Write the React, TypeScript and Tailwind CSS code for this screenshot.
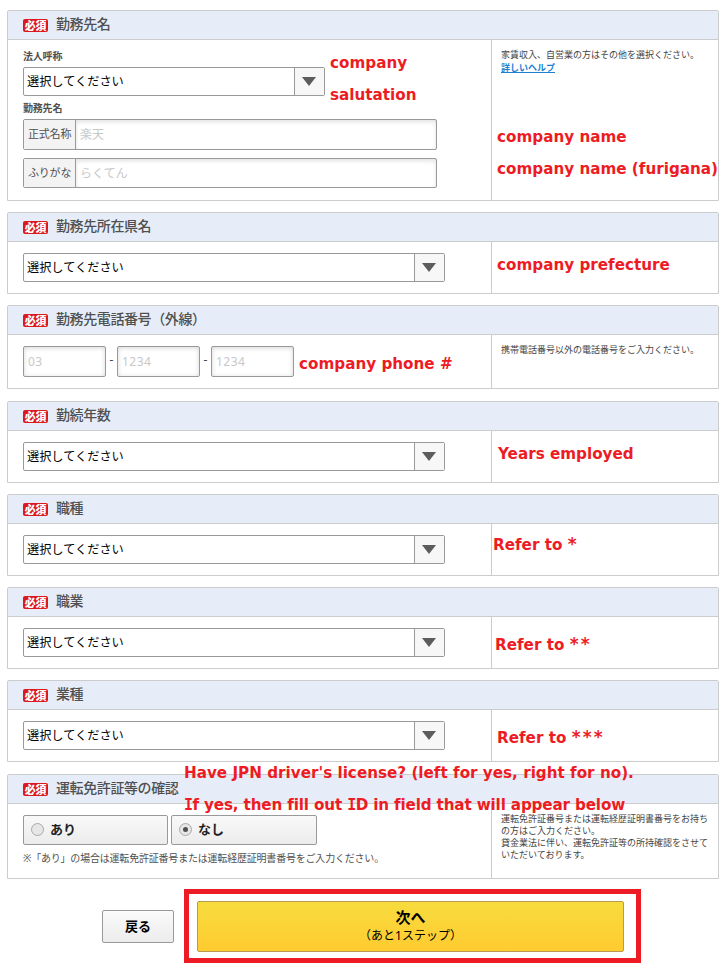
import type { ReactNode } from 'react';

const jp = "font-['Noto_Sans','Noto_Sans_CJK_JP',sans-serif]";

function Panel({ title, className, children, side }: { title: string; className: string; children: ReactNode; side?: ReactNode }) {
  return (
    <section className={`flex w-[712px] flex-col rounded-t-[2px] border border-[#ccc] ${className}`}>
      <header className="flex h-[29px] shrink-0 items-center border-b border-[#ccc] bg-[#e6edf8] pl-[15px]">
        <span className="flex h-[13px] w-[25px] items-center justify-center rounded-[2px] bg-[#dc171d] text-[11px] leading-none font-black tracking-[-0.2px] text-white">
          必須
        </span>
        <h2 className="-mt-[3px] ml-2 text-[14px] leading-5 font-medium tracking-[-0.4px] text-[#505050]">{title}</h2>
      </header>
      <div className="flex min-h-0 flex-1">
        <div className="w-[483px] shrink-0 pl-[15px]">{children}</div>
        <aside className="flex-1 border-l border-[#ccc] pl-[9px] text-[9px] leading-3 whitespace-nowrap text-[#444]">{side}</aside>
      </div>
    </section>
  );
}

function Select({ className }: { className: string }) {
  return (
    <div className={`flex h-[29px] rounded-[2px] border border-[#999] bg-white ${className}`}>
      <div className="flex-1 pl-[3px] text-[12.2px] leading-[27px] text-black">選択してください</div>
      <div className="flex w-[30px] items-center border-l border-[#999] bg-[#f7f7f7] pl-[7px]">
        <svg width="14" height="9" viewBox="0 0 14 9">
          <path d="M0 0H14L7 9Z" fill="#5c5c5c" />
        </svg>
      </div>
    </div>
  );
}

function LabeledInput({ label, value, className }: { label: string; value: string; className: string }) {
  return (
    <div className={`flex w-[414px] rounded-[2px] border border-[#999] ${className}`}>
      <div className="w-[52px] shrink-0 border-r border-[#999] bg-[#f3f3f3] pl-[4px] text-[11px] leading-[27px] tracking-[-0.2px] text-[#505050]">{label}</div>
      <div className="flex-1 pl-[4px] text-[12px] leading-[29px] text-[#c8c8c8] shadow-[inset_0_2px_4px_rgba(0,0,0,0.12)]">{value}</div>
    </div>
  );
}

function PhoneBox({ value }: { value: string }) {
  return (
    <div className="h-[31px] w-[83px] rounded-[2px] border border-[#999] pl-[4px] text-[12px] leading-[29px] tracking-[0.5px] text-[#c8c8c8] shadow-[inset_0_1px_5px_rgba(0,0,0,0.16)]">
      {value}
    </div>
  );
}

function Radio({ label, checked, className }: { label: string; checked?: boolean; className: string }) {
  return (
    <div className={`flex h-[30px] items-center rounded-[2px] border border-[#999] bg-linear-to-b from-[#f9f9f9] to-[#ececec] pl-[7px] ${className}`}>
      <span className="-mt-px flex size-[13px] items-center justify-center rounded-full border border-[#aaa] bg-[#e6e6e6]">
        {checked && <span className="size-[5px] rounded-full bg-[#505050]" />}
      </span>
      <span className="-mt-[2px] ml-[6px] text-[13px] leading-5 font-bold text-[#222]">{label}</span>
    </div>
  );
}

function Note({ className, children }: { className: string; children: ReactNode }) {
  return (
    <p
      className={`absolute pt-px font-['DejaVu_Sans',sans-serif] text-[15.2px] leading-8 font-bold whitespace-nowrap text-[#ed1c24] [font-variant-ligatures:none] ${className}`}
    >
      {children}
    </p>
  );
}

function SerifI() {
  return <span className="font-['DejaVu_Sans_Mono',monospace] text-[15px] tracking-[-0.5px]">I</span>;
}

function Stars({ children }: { children: string }) {
  return <span className="text-[17px] leading-none tracking-[2.1px]">{children}</span>;
}

export default function App() {
  return (
    <main lang="ja" className={`relative h-[965px] w-[725px] overflow-hidden bg-white pt-[10px] pl-[7px] ${jp}`}>
      <Panel
        title="勤務先名"
        className="h-[191px]"
        side={
          <div className="pt-[9px]">
            家賃収入、自営業の方はその他を選択ください。
            <a className="mt-px block font-bold text-[#1a7fcf] underline">詳しいヘルプ</a>
          </div>
        }
      >
        <div className="h-[27px] pt-[10px] text-[10px] leading-3 font-bold tracking-[-0.2px] text-[#505050]">法人呼称</div>
        <Select className="w-[302px]" />
        <div className="h-[23px] pt-[6px] text-[10px] leading-3 font-bold tracking-[-0.2px] text-[#505050]">勤務先名</div>
        <LabeledInput label="正式名称" value="楽天" className="h-[31px]" />
        <LabeledInput label="ふりがな" value="らくてん" className="mt-2 h-[30px]" />
      </Panel>
      <Panel title="勤務先所在県名" className="mt-[11px] h-[82px]">
        <Select className="mt-[11px] w-[422px]" />
      </Panel>
      <Panel title="勤務先電話番号（外線）" className="mt-[11px] h-[84px]" side={<div className="pt-[9px]">携帯電話番号以外の電話番号をご入力ください。</div>}>
        <div className="flex pt-[11px] text-[12px] leading-[27px] text-[#444]">
          <PhoneBox value="03" />
          <span className="w-[11px] text-center">-</span>
          <PhoneBox value="1234" />
          <span className="w-[11px] text-center">-</span>
          <PhoneBox value="1234" />
        </div>
      </Panel>
      <Panel title="勤続年数" className="mt-3 h-[82px]">
        <Select className="mt-[11px] w-[422px]" />
      </Panel>
      <Panel title="職種" className="mt-[11px] h-[82px]">
        <Select className="mt-[11px] w-[422px]" />
      </Panel>
      <Panel title="職業" className="mt-[11px] h-[82px]">
        <Select className="mt-[11px] w-[422px]" />
      </Panel>
      <Panel title="業種" className="mt-[11px] h-[82px]">
        <Select className="mt-[11px] w-[422px]" />
      </Panel>
      <Panel
        title="運転免許証等の確認"
        className="mt-3 h-[105px]"
        side={
          <div className="pt-[9px]">
            運転免許証番号または運転経歴証明書番号をお持ち
            <br />
            の方はご入力ください。
            <br />
            貸金業法に伴い、運転免許証等の所持確認をさせて
            <br />
            いただいております。
          </div>
        }
      >
        <div className="flex gap-[3px] pt-[11px]">
          <Radio label="あり" className="w-[145px]" />
          <Radio label="なし" checked className="w-[146px]" />
        </div>
        <p className="mt-[6px] text-[10px] leading-[14px] tracking-[-0.2px] text-[#505050]">※「あり」の場合は運転免許証番号または運転経歴証明書番号をご入力ください。</p>
      </Panel>

      <div className="mt-[10px] flex items-start pl-[95px]">
        <button className="mt-[21px] h-[33px] w-[72px] rounded-[2px] border border-[#999] bg-linear-to-b from-[#fafafa] to-[#ececec] text-[13px] leading-none font-bold text-black">
          戻る
        </button>
        <div className="ml-[10px] h-[74px] w-[457px] border-[5px] border-[#ed1c24] pt-[7px] pl-[8px]">
          <button className="flex h-[51px] w-[427px] flex-col items-center rounded-[2px] border border-[#b89b50] bg-linear-to-b from-[#f7dc3e] to-[#ffcb30] pt-[5px] text-black">
            <span className="text-[15px] leading-5 font-bold">次へ</span>
            <span className="mt-px text-[12px] leading-4">（あと1ステップ）</span>
          </button>
        </div>
      </div>

      <Note className="top-[46px] left-[330px]">
        company
        <br />
        salutation
      </Note>
      <Note className="top-[120px] left-[497px]">
        company name
        <br />
        company name (furigana)
      </Note>
      <Note className="top-[248px] left-[497px]">company prefecture</Note>
      <Note className="top-[347px] left-[299px]">company phone #</Note>
      <Note className="top-[437px] left-[498px]">Years employed</Note>
      <Note className="top-[528px] left-[493px]">
        Refer to <Stars>*</Stars>
      </Note>
      <Note className="top-[628px] left-[495px]">
        Refer to <Stars>**</Stars>
      </Note>
      <Note className="top-[721px] left-[497px]">
        Refer to <Stars>***</Stars>
      </Note>
      <Note className="top-[756px] left-[184px]">Have JPN driver's license? (left for yes, right for no).</Note>
      <Note className="top-[788px] left-[184px] tracking-[-0.16px]">
        <SerifI />f yes, then fill out <SerifI />D in field that will appear below
      </Note>
    </main>
  );
}
